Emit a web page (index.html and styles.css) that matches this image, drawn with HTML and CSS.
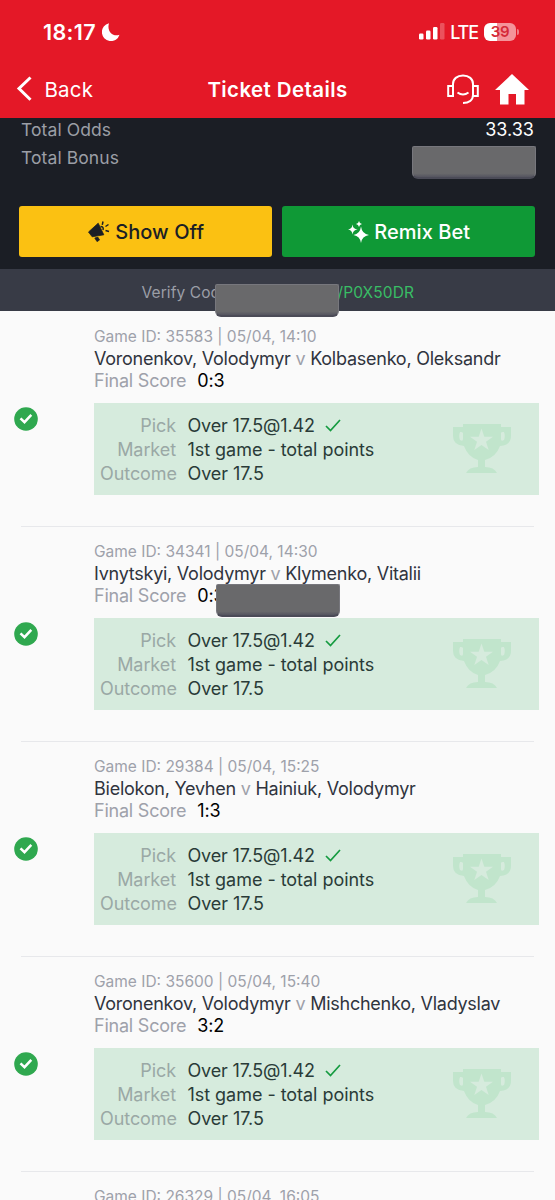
FILE: index.html
```html
<!DOCTYPE html>
<html lang="en">
<head>
<meta charset="utf-8">
<title>Ticket Details</title>
<link rel="stylesheet" href="styles.css">
</head>
<body>
<svg class="defs" width="0" height="0">
  <symbol id="trophy" viewBox="0 0 58 50">
    <path fill="#c1e5cc" fill-rule="evenodd" d="M10 0H48V3H58V12Q58 21 47 22Q43 33 32 36V43Q41 43 44 49H13Q16 43 25 43V36Q15 33 11 22Q0 21 0 12V3H10ZM7 8Q5.500 12 7 16Q10 18 10 15V9Q9 7.500 7 8ZM51 8Q48 7.500 48 9V15Q48 18 51 16Q52.500 12 51 8Z"/>
    <path fill="#d6ebdd" d="M28.500 4.500L31.300 12.700H40L33 17.700L35.700 26L28.500 21L21.300 26L24 17.700L17 12.700H25.700Z"/>
  </symbol>
  <symbol id="won" viewBox="0 0 24 24">
    <circle cx="12" cy="12" r="11.800" fill="#2fa84f"/>
    <path d="M6.500 11.300L10.500 15.200L17.300 7.800" fill="none" stroke="#fff" stroke-width="2.500"/>
  </symbol>
  <symbol id="tick" viewBox="0 0 16 13">
    <path d="M1 7L5.500 11.500L15 1" fill="none" stroke="#159b40" stroke-width="1.700"/>
  </symbol>
</svg>
<header class="header">
  <div class="status">
    <div class="clock"><span class="time">18:17</span>
      <svg width="18" height="18" viewBox="0 0 18 18"><path fill="#fff" d="M7 .3A9 9 0 1 0 17.500 11.700C11 14.500 4.500 8 7 .3Z"/></svg>
    </div>
    <div class="signal">
      <svg width="26" height="17" viewBox="0 0 26 17"><g fill="#fff"><rect x="0" y="10.500" width="4.500" height="6" rx="1.200"/><rect x="7" y="7.500" width="4.500" height="9" rx="1.200"/><rect x="14" y="4" width="4.500" height="12.500" rx="1.200"/><rect x="21" y="0" width="4.500" height="16.500" rx="1.200" opacity=".25"/></g></svg>
      <span class="lte">LTE</span>
      <span class="battery">39</span><i class="nub"></i>
    </div>
  </div>
  <nav class="nav">
    <div class="back"><svg width="16" height="26" viewBox="0 0 16 26"><path d="M14.500 1.500L3 12.500L14.500 23.800" fill="none" stroke="#fff" stroke-width="3"/></svg><span>Back</span></div>
    <h1 class="title">Ticket Details</h1>
    <div class="actions">
      <svg width="32" height="31" viewBox="0 0 32 31" fill="none" stroke="#fff" stroke-width="2"><path d="M6 12V10C6 5 10 1.500 16 1.500S26 5 26 10V21C26 26 22 29 16 29"/><path d="M6 11.500V22H1.200V12H6M26 12H30.800V22H26V11.500M10.500 18.500Q16 22.500 21.500 18.500"/></svg>
      <svg width="34" height="31" viewBox="0 0 34 31"><path fill="#fff" d="M17 0L34 16H29.500V30.500H21V20H13.500V30.500H5V16H0Z"/></svg>
    </div>
  </nav>
</header>
<section class="summary">
  <div class="total"><span class="label odds">Total Odds</span><span class="value">33.33</span></div>
  <div class="total"><span class="label bonus">Total Bonus</span><span class="mask"></span></div>
  <div class="buttons">
    <div class="button yellow"><svg width="22" height="21" viewBox="0 0 22 21"><path fill="#1b1e25" d="M.5 11L10.200 2.200L15.800 13.800L4.200 15.800ZM6.800 17L10 16.300L11.500 19L9 20.600Z" stroke="#1b1e25" stroke-width=".8" stroke-linejoin="round"/><path d="M12.500 5.500Q16 5.500 15 9M14.300 3.800L15 .5M17.500 5.500L20.500 3.500M17.500 9.500L21 10.500" fill="none" stroke="#1b1e25" stroke-width="1.500"/></svg><span class="show">Show Off</span></div>
    <div class="button green"><svg width="21" height="22" viewBox="0 0 21 22"><path fill="#fff" d="M13 5.500Q14 13 21 14Q14 15 13 22Q12 15 5.500 14Q12 13 13 5.500ZM4.500 3.500Q5 8 9.500 8.500Q5 9 4.500 13.500Q4 9 0 8.500Q4 8 4.500 3.500ZM11 0Q11.500 2.700 14 3Q11.500 3.500 11 6Q10.500 3.500 8 3Q10.500 2.700 11 0Z"/></svg><span class="remix">Remix Bet</span></div>
  </div>
</section>
<div class="verify"><span class="vlabel">Verify Cod</span><span class="code">/P0X50DR</span><span class="mask code-mask"></span></div>
<main class="games">
  <article class="game">
    <div class="meta">Game ID: 35583 | 05/04, 14:10</div>
    <div class="teams">Voronenkov, Volodymyr <i>v</i> Kolbasenko, Oleksandr</div>
    <div class="score"><span>Final Score</span><b>0:3</b></div>
    <div class="result"><svg class="won"><use href="#won"/></svg>
      <div class="bet"><dl><dt>Pick</dt><dd>Over 17.5@1.42 <svg class="tick"><use href="#tick"/></svg></dd><dt>Market</dt><dd class="market">1st game - total points</dd><dt>Outcome</dt><dd>Over 17.5</dd></dl><svg class="trophy"><use href="#trophy"/></svg></div></div>
  </article>
  <article class="game">
    <div class="meta">Game ID: 34341 | 05/04, 14:30</div>
    <div class="teams">Ivnytskyi, Volodymyr <i>v</i> Klymenko, Vitalii</div>
    <div class="score"><span>Final Score</span><b>0:3</b><span class="mask score-mask"></span></div>
    <div class="result"><svg class="won"><use href="#won"/></svg>
      <div class="bet"><dl><dt>Pick</dt><dd>Over 17.5@1.42 <svg class="tick"><use href="#tick"/></svg></dd><dt>Market</dt><dd class="market">1st game - total points</dd><dt>Outcome</dt><dd>Over 17.5</dd></dl><svg class="trophy"><use href="#trophy"/></svg></div></div>
  </article>
  <article class="game">
    <div class="meta">Game ID: 29384 | 05/04, 15:25</div>
    <div class="teams">Bielokon, Yevhen <i>v</i> Hainiuk, Volodymyr</div>
    <div class="score"><span>Final Score</span><b>1:3</b></div>
    <div class="result"><svg class="won"><use href="#won"/></svg>
      <div class="bet"><dl><dt>Pick</dt><dd>Over 17.5@1.42 <svg class="tick"><use href="#tick"/></svg></dd><dt>Market</dt><dd class="market">1st game - total points</dd><dt>Outcome</dt><dd>Over 17.5</dd></dl><svg class="trophy"><use href="#trophy"/></svg></div></div>
  </article>
  <article class="game">
    <div class="meta">Game ID: 35600 | 05/04, 15:40</div>
    <div class="teams">Voronenkov, Volodymyr <i>v</i> Mishchenko, Vladyslav</div>
    <div class="score"><span>Final Score</span><b>3:2</b></div>
    <div class="result"><svg class="won"><use href="#won"/></svg>
      <div class="bet"><dl><dt>Pick</dt><dd>Over 17.5@1.42 <svg class="tick"><use href="#tick"/></svg></dd><dt>Market</dt><dd class="market">1st game - total points</dd><dt>Outcome</dt><dd>Over 17.5</dd></dl><svg class="trophy"><use href="#trophy"/></svg></div></div>
  </article>
  <article class="game last">
    <div class="meta">Game ID: 26329 | 05/04, 16:05</div>
  </article>
</main>
</body>
</html>
```
FILE: styles.css
```css
* { box-sizing: border-box; }
body { margin: 0; width: 555px; height: 1200px; overflow: hidden; background: #fafafa; color: #30343e; font-family: Inter, "Liberation Sans", sans-serif; font-size: 18px; display: flex; flex-direction: column; white-space: nowrap; }
svg { display: block; flex: none; }
.defs { position: absolute; }
.header { height: 118px; flex: none; background: #e41827; color: #fff; }
.status { height: 60px; padding: 3px 36px 0 43px; display: flex; align-items: center; justify-content: space-between; }
.clock { display: flex; align-items: center; gap: 6px; }
.time { font-size: 21.500px; font-weight: 600; letter-spacing: .35px; }
.signal { display: flex; align-items: center; }
.lte { font-size: 18px; font-weight: 500; letter-spacing: -1.100px; margin: 1px 6px 0 5px; }
.battery { width: 32px; height: 18px; border-radius: 6px; background: linear-gradient(90deg, #fff 0 13px, #f4949a 13px); color: #d52a38; font-size: 15px; font-weight: 600; line-height: 18px; text-align: center; letter-spacing: -.3px; }
.nub { width: 2px; height: 6px; margin-left: 1px; background: #f07d86; border-radius: 0 2px 2px 0; }
.status .signal { margin-right: 0; }
.nav { height: 58px; padding: 0 26px 0 16px; display: grid; grid-template-columns: 1fr auto 1fr; align-items: center; }
.back { display: flex; align-items: center; gap: 12.500px; font-size: 20.500px; letter-spacing: .2px; }
.title { margin: 0 0 0 10px; font-size: 20.500px; font-weight: 600; letter-spacing: .4px; }
.actions { display: flex; justify-content: flex-end; align-items: center; gap: 16px; }
.summary { height: 151px; flex: none; background: #1b1e25; color: #9b9ea6; padding: 0 19px; }
.total { display: flex; justify-content: space-between; height: 28px; line-height: 24px; padding: 0 2px; }
.label { font-size: 17.500px; letter-spacing: .08px; }
.value { color: #fff; font-size: 18px; }
.mask { width: 124px; height: 33px; flex: none; background: linear-gradient(#69696b 0 88%, #555560); border: 1px solid #77777d; border-bottom: 2px solid #4b4b57; border-radius: 2px 2px 6px 6px; }
.total .mask { margin-right: -2px; }
.buttons { display: grid; grid-template-columns: 253px 253px; gap: 10px; margin: 32px 0 0 .4px; }
.button { height: 51px; border-radius: 3px; display: flex; align-items: center; justify-content: center; gap: 5.500px; font-size: 20px; font-weight: 500; letter-spacing: .06px; }
.yellow { background: #fbc112; color: #1b1e25; }
.green { background: #0f9936; color: #fff; }
.verify { position: relative; height: 42px; flex: none; background: #383b46; color: #9b9ea6; font-size: 15.500px; line-height: 48px; padding: 0 141px 0 141.500px; display: flex; justify-content: space-between; letter-spacing: .1px; }
.code { color: #39bd65; }
.code-mask { position: absolute; left: 215px; top: 15px; z-index: 2; }
.games { height: 889px; overflow: hidden; padding: 1px 16px 0 21px; }
.game { height: 215px; padding: 14px 0 0 73px; position: relative; }
.game::after { content: ""; position: absolute; left: 0; right: 5px; bottom: 0; height: 1px; background: #e7e8eb; }
.last { height: 28px; }
.last::after { display: none; }
.meta { font-size: 15.500px; line-height: 22px; color: #9ea1aa; }
.teams { line-height: 22px; letter-spacing: -.25px; }
.teams i { color: #9ea1aa; font-style: normal; }
.score { position: relative; line-height: 22px; color: #9ea1aa; display: flex; gap: 11px; letter-spacing: -.22px; }
.score b { font-weight: 400; color: #000; }
.score-mask { position: absolute; left: 122px; top: -1px; z-index: 2; }
.result { display: flex; margin: 11px 0 0 -80px; gap: 56px; }
.won { width: 24px; height: 24px; margin-top: 4px; }
.bet { width: 445px; height: 92px; background: #d6ebdd; padding: 11px 28px 0 6px; display: flex; justify-content: space-between; }
dl { margin: 0; display: grid; grid-template-columns: 76px auto; grid-auto-rows: 24px; column-gap: 11.500px; line-height: 24px; letter-spacing: -.08px; }
dt { color: #9aa8a5; text-align: right; }
dd { margin: 0; display: flex; align-items: center; gap: 10px; color: #2a3b38; }
dd.market { letter-spacing: -.04px; }
.tick { width: 16px; height: 13px; margin-top: -2px; }
dd:first-of-type { letter-spacing: -.16px; }
.trophy { width: 58px; height: 50px; margin-top: 10px; }
```
